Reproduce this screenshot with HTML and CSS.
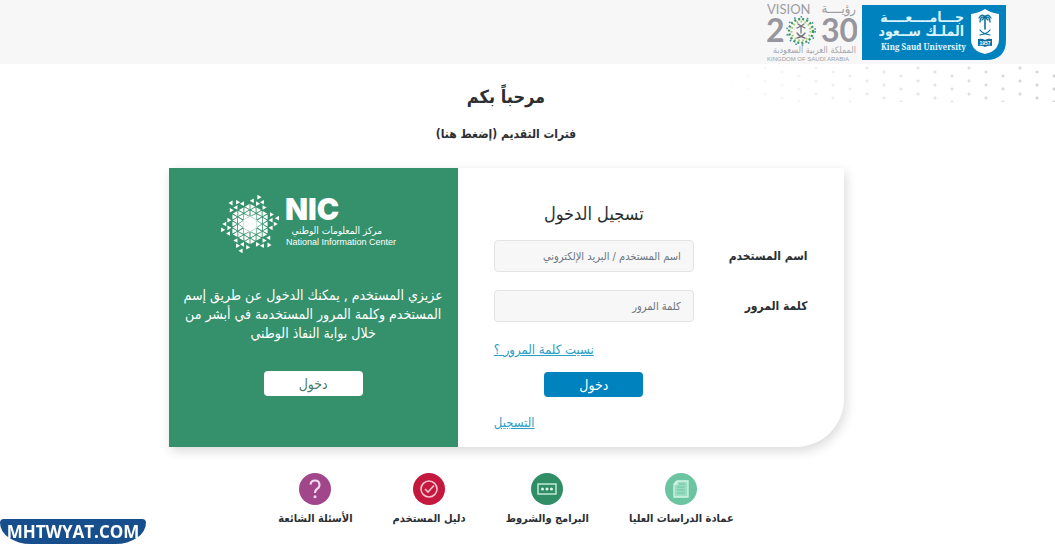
FILE: index.html
```
<!DOCTYPE html>
<html lang="ar" dir="rtl">
<head>
    <meta charset="UTF-8">
    <meta name="viewport" content="width=device-width, initial-scale=1">
    <title>تسجيل الدخول</title>
    <link rel="stylesheet" href="styles.css">
</head>
<body>
    <header class="header">
        <!-- King Saud University -->
        <svg class="logo-ksu" width="144" height="55" viewBox="0 0 144 55" direction="ltr" role="img" aria-label="King Saud University">
            <path d="M0 0H144V35Q144 55 124 55H0Z" fill="#0082be"/>
            <text class="ksu-ar" x="102" y="17" text-anchor="start" direction="rtl">جـــامــــعــــة</text>
            <text class="ksu-ar" x="102" y="31" text-anchor="start" direction="rtl">الملـك ســعود</text>
            <text class="ksu-en" x="19" y="45">King Saud University</text>
            <path d="M109 9Q117 8 123 4Q129 8 137 9V34Q137 46 123 49Q109 46 109 34Z" fill="#fff"/>
            <g fill="none" stroke="#0a6f9f" stroke-linecap="round">
                <path d="M123 11V24" stroke-width="1.6"/>
                <path d="M123 12Q120 8 117 13M123 12Q126 8 129 13M123 12Q118 11 118 17M123 12Q128 11 128 17M123 12L120 15M123 12L126 15" stroke-width="1.3"/>
                <path d="M118 25Q121 29 128 30M128 25Q125 29 118 30" stroke-width="1.2"/>
            </g>
            <path d="M116 34Q120 33 123 35Q126 33 130 34V41Q126 40 123 42Q120 40 116 41Z" fill="#0a6f9f"/>
            <text class="ksu-year" x="123" y="40" text-anchor="middle">1957</text>
        </svg>

        <!-- Vision 2030 -->
        <svg class="logo-vision" width="90" height="60" viewBox="0 0 90 60" direction="ltr" role="img" aria-label="Vision 2030">
            <text class="vision-word" x="0" y="12">VISION</text>
            <text class="vision-word vision-ar" x="89" y="11" text-anchor="start" direction="rtl">رؤيــــة</text>
            <text class="vision-num" x="-1" y="40">2</text>
            <text class="vision-num" x="91" y="40" text-anchor="end">30</text>
            <g fill="none">
                <circle cx="34" cy="29" r="12" stroke="#3f9a5d" stroke-width="2.4" stroke-dasharray="2 2.1"/>
                <circle cx="34" cy="29" r="9.500" stroke="#a5cb6f" stroke-width="2" stroke-dasharray="1.6 2.4"/>
                <circle cx="34" cy="29" r="14.200" stroke="#4d8fbd" stroke-width="1.6" stroke-dasharray="1.6 5"/>
            </g>
            <path d="M34 24V31M34 24L30 26M34 24L38 26M34 24L31 22M34 24L37 22M30 31Q33 35 38 36M38 31Q35 35 30 36" fill="none" stroke="#77777d" stroke-width="1.3" stroke-linecap="round"/>
            <text class="vision-sub-ar" x="89" y="51" text-anchor="start" direction="rtl">المملكة العربية السعودية</text>
            <text class="vision-sub" x="0" y="59">KINGDOM OF SAUDI ARABIA</text>
        </svg>
    </header>

    <main class="main">
        <h1 class="welcome">مرحباً بكم</h1>
        <a class="periods" href="#">فترات التقديم (إضغط هنا)</a>

        <div class="card">
            <form class="login">
                <h2 class="login-title">تسجيل الدخول</h2>
                <label for="username">اسم المستخدم</label>
                <input type="text" id="username" placeholder="اسم المستخدم / البريد الإلكتروني">
                <label for="password">كلمة المرور</label>
                <input type="password" id="password" placeholder="كلمة المرور">
                <a class="link" href="#">نسيت كلمة المرور ؟</a>
                <button type="submit" class="btn btn-blue">دخول</button>
                <a class="link" href="#">التسجيل</a>
            </form>

            <section class="nic">
                <svg class="nic-logo" width="184" height="60" viewBox="0 0 184 60" direction="ltr" role="img" aria-label="National Information Center">
                    <defs>
                        <!-- one sixth of the mark -->
                        <g id="sector">
                            <path d="M0 0L6.500 -3.700V3.700Z" stroke="#fff" stroke-width=".5"/>
                            <path d="M7.200 -3.500L12 -6.400V-.6ZM7.200 3.500L12 .6V6.400ZM7 -3V3L11.600 0Z"/>
                            <path d="M13 -7L17.600 -9.600V-4.400ZM13 0L17.600 -2.600V2.600ZM13 7L17.600 4.400V9.600ZM12.800 -6.200V-.8L17.200 -3.500ZM12.800 6.200V.8L17.200 3.500Z"/>
                            <path d="M18.600 -3.800L22.600 -6.200V-1.400ZM18.600 3.800L22.600 1.400V6.200Z"/>
                            <path d="M23.800 -2.300V2.300L27.800 0ZM20 -11.800V-7.200L24 -9.500ZM24.800 -5.800L29 -8.200V-3.400Z"/>
                        </g>
                    </defs>
                    <g fill="#fff" transform="translate(29 30)">
                        <use href="#sector"/>
                        <use href="#sector" transform="rotate(60)"/>
                        <use href="#sector" transform="rotate(120)"/>
                        <use href="#sector" transform="rotate(180)"/>
                        <use href="#sector" transform="rotate(240)"/>
                        <use href="#sector" transform="rotate(300)"/>
                    </g>
                    <text class="nic-name" x="64" y="26">NIC</text>
                    <text class="nic-ar" x="161" y="40" text-anchor="start" direction="rtl">مركز المعلومات الوطني</text>
                    <text class="nic-en" x="65" y="51">National Information Center</text>
                </svg>
                <p class="nic-text">عزيزي المستخدم , يمكنك الدخول عن طريق إسم المستخدم وكلمة المرور المستخدمة في أبشر من خلال بوابة النفاذ الوطني</p>
                <button type="button" class="btn btn-white">دخول</button>
            </section>
        </div>

        <nav class="shortcuts">
            <a href="#">
                <svg width="32" height="32" viewBox="0 0 32 32">
                    <circle cx="16" cy="16" r="16" fill="#6cc5a1"/>
                    <path d="M12 8H23V24H9V11ZM12 8V11H9" fill="#9bdcc2" stroke="#d3f5e6" stroke-width="1.3"/>
                    <path d="M14 11H20M12 14H20M12 17H20M12 20H20" stroke="#6cc5a1" stroke-width="1.2"/>
                </svg>
                عمادة الدراسات العليا
            </a>
            <a href="#">
                <svg width="32" height="32" viewBox="0 0 32 32">
                    <circle cx="16" cy="16" r="16" fill="#2f8e66"/>
                    <rect x="7" y="11" width="18" height="10" fill="none" stroke="#c9efdd" stroke-width="1.4"/>
                    <circle cx="11.5" cy="16" r="1.5" fill="#e4f9ef"/>
                    <circle cx="16" cy="16" r="1.5" fill="#e4f9ef"/>
                    <circle cx="20.5" cy="16" r="1.5" fill="#e4f9ef"/>
                </svg>
                البرامج والشروط
            </a>
            <a href="#">
                <svg width="32" height="32" viewBox="0 0 32 32">
                    <circle cx="16" cy="16" r="16" fill="#c4183f"/>
                    <g fill="none" stroke="#f7c3cf" stroke-width="1.6">
                        <circle cx="16" cy="16" r="8"/>
                        <path d="M12 16L15 19L21 12.500"/>
                    </g>
                </svg>
                دليل المستخدم
            </a>
            <a href="#">
                <svg width="32" height="32" viewBox="0 0 32 32">
                    <circle cx="16" cy="16" r="16" fill="#a2468c"/>
                    <path d="M11.500 11.500Q12 7.500 16 7.500Q20.500 7.500 20.500 12Q20.500 14.500 18 16Q16 17.300 16 20" fill="none" stroke="#f6d9ef" stroke-width="2.2"/>
                    <circle cx="16" cy="23.800" r="1.500" fill="#f6d9ef"/>
                </svg>
                الأسئلة الشائعة
            </a>
        </nav>
    </main>

    <div class="watermark" dir="ltr">MHTWYAT.COM</div>
</body>
</html>
```
FILE: styles.css
```
* { box-sizing: border-box; }
body { margin: 0; font-family: "DejaVu Sans Condensed", "DejaVu Sans", sans-serif; font-size: 12px; color: #2b2f33; background: #fff; }
a { color: inherit; text-decoration: none; }

/* Header */
.header { display: flex; align-items: center; gap: 5px; height: 64px; padding: 0 49px; background: #f7f7f7; }
.ksu-ar { font-size: 14px; font-weight: bold; fill: #d9f3ff; }
.ksu-en { font-family: "Noto Serif", "DejaVu Serif", "Liberation Serif", serif; font-size: 8px; font-weight: bold; fill: #e4f6ff; }
.ksu-year { font-family: "Liberation Sans", sans-serif; font-size: 5px; font-weight: bold; fill: #fff; }
.vision-word { font-family: Lato, sans-serif; font-size: 13px; fill: #9c9ca2; }
.vision-ar { font-family: "DejaVu Sans Condensed", "DejaVu Sans", sans-serif; }
.vision-num { font-family: Lato, sans-serif; font-size: 32px; font-weight: bold; fill: #97969e; }
.vision-sub-ar { font-size: 9px; fill: #a8a8ae; }
.vision-sub { font-family: "Liberation Sans", sans-serif; font-size: 6px; fill: #a0a0a6; }

/* Main */
.main { position: relative; display: flex; flex-direction: column; align-items: center; padding: 16px 43px 16px 0; }
.main::before {
    content: "";
    position: absolute;
    top: 2px;
    right: 0;
    width: 350px;
    height: 36px;
    background-image:
        radial-gradient(circle at 9px 2px, #d4d4d4 1px, transparent 2px),
        radial-gradient(circle at 26px 6px, #d4d4d4 1px, transparent 2px),
        radial-gradient(circle at 43px 10px, #d4d4d4 1px, transparent 2px);
    background-size: 51px 13px;
    -webkit-mask-image: linear-gradient(to right, transparent, #000);
    mask-image: linear-gradient(to right, transparent, #000);
}
.welcome { margin: 0; font-size: 18px; line-height: 34px; }
.periods { margin-top: 10px; font-weight: bold; line-height: 20px; }

/* Card */
.card { display: grid; grid-template-columns: 4fr 3fr; width: 100%; max-width: 675px; margin-top: 24px; background: #fff; border-bottom-right-radius: 48px; box-shadow: 2px 4px 12px rgba(0, 0, 0, 0.15); }
.login { display: grid; grid-template-columns: 1fr 200px; align-content: start; align-items: center; padding: 32px 36px 14px; }
.login-title { grid-column: 2; justify-self: center; margin: 0 0 12px; font-size: 18px; font-weight: normal; line-height: 28px; }
.login label { margin-bottom: 18px; font-weight: bold; }
.login input { width: 100%; height: 32px; margin-bottom: 18px; padding: 0 12px; font: inherit; font-size: 11px; background: #f7f7f7; border: 1px solid #e4e4e4; border-radius: 4px; }
.login input::placeholder { color: #6c757d; opacity: 1; }
.link { grid-column: 2; justify-self: end; color: #2a9fc6; font-size: 13px; line-height: 20px; text-decoration: underline; }
.btn { width: 99px; height: 25px; padding: 0; border: 0; border-radius: 4px; font: inherit; font-size: 14px; cursor: pointer; }
.btn-blue { grid-column: 2; justify-self: center; margin: 12px 0 16px; background: #0082be; color: #fff; }
.btn-white { background: #fff; color: #4a7a66; }

.nic { display: flex; flex-direction: column; align-items: center; padding: 26px 8px; background: #34916b; color: #fff; }
.nic-name { font-family: Inter, sans-serif; font-size: 30px; font-weight: 900; fill: #fff; }
.nic-ar { font-size: 10px; fill: #fff; }
.nic-en { font-family: "Liberation Sans", sans-serif; font-size: 9px; fill: #fff; }
.nic-text { margin: 32px 0 28px; font-size: 14px; line-height: 19px; text-align: center; }

/* Shortcuts */
.shortcuts { display: flex; gap: 40px; margin-top: 26px; }
.shortcuts a { display: flex; flex-direction: column; align-items: center; gap: 4px; font-size: 11px; font-weight: bold; line-height: 20px; }

.watermark { position: fixed; left: 0; bottom: 0; width: 146px; height: 25px; font-family: "Open Sans", sans-serif; font-size: 17px; font-weight: bold; line-height: 25px; text-align: center; color: #fff; background: #174e8c; border-radius: 4px 4px 32px 32px / 4px 4px 22px 22px; }
```
